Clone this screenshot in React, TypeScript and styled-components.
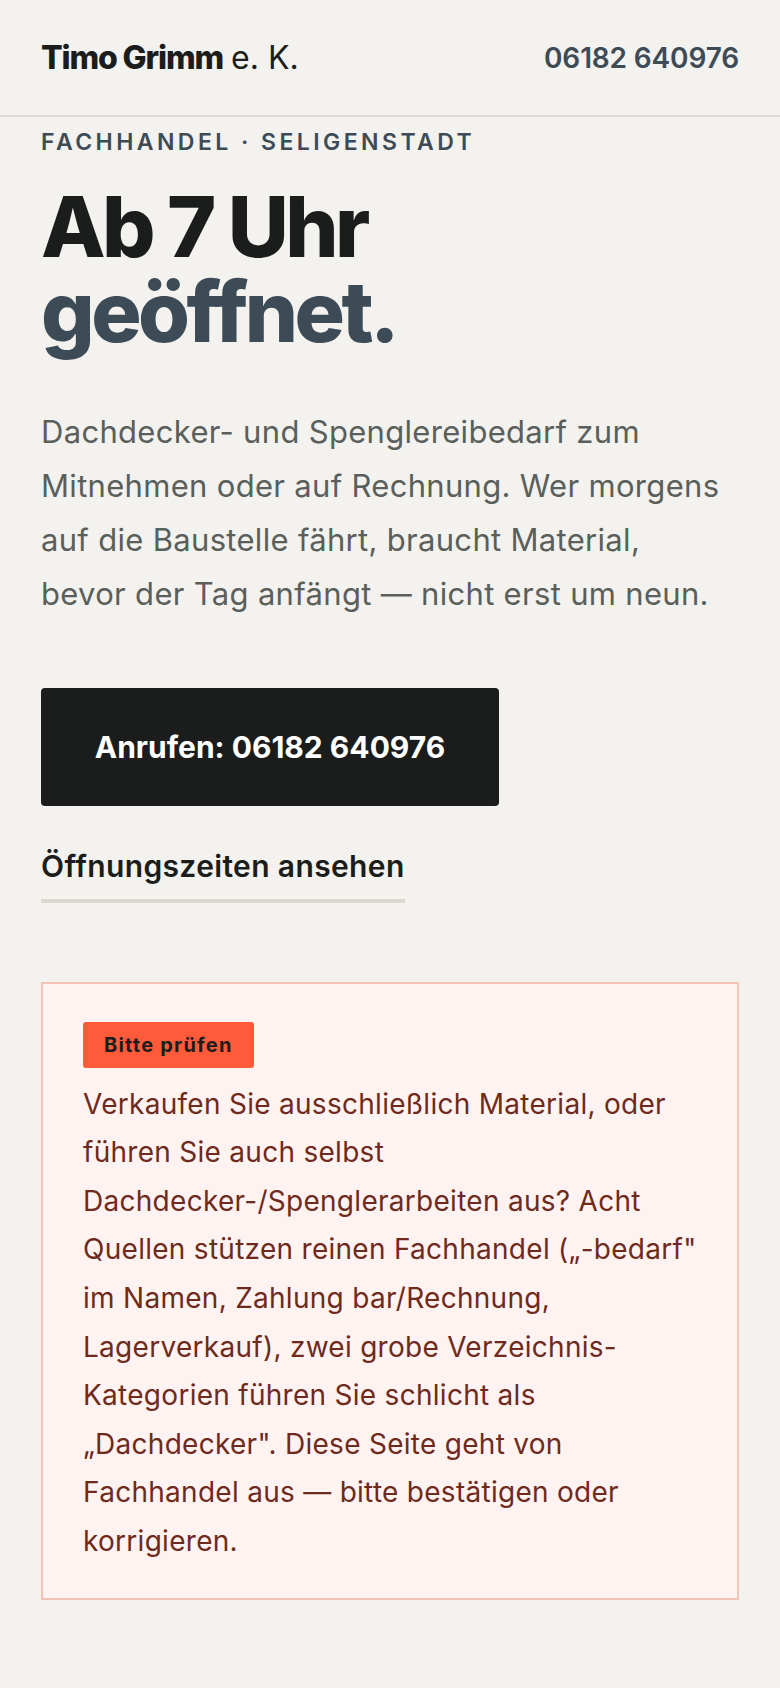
import React, { ReactElement } from 'react';
import styled, { createGlobalStyle } from 'styled-components';

const GlobalStyle = createGlobalStyle`
  html, body {
    margin: 0;
    padding: 0;
    background: #f3f2ee;
  }
  body {
    font-family: Inter, 'Noto Sans', sans-serif;
    color: #1b1d1c;
  }
  * {
    box-sizing: border-box;
  }
`;

const Header = styled.header`
  display: flex;
  align-items: center;
  justify-content: space-between;
  height: 117px;
  padding: 0 41px 0 41px;
  border-bottom: 2px solid #e0dbd2;
`;

const Logo = styled.div`
  font-size: 32px;
  font-weight: 800;
  letter-spacing: -0.035em;
  color: #1b1d1c;
`;

const LogoSuffix = styled.span`
  font-weight: 400;
  letter-spacing: 0;
  margin-left: 8px;
`;

const HeaderPhone = styled.a`
  font-size: 28px;
  font-weight: 600;
  color: #3d4b57;
  text-decoration: none;
  letter-spacing: -0.005em;
`;

const Hero = styled.section`
  display: flex;
  flex-direction: column;
  align-items: flex-start;
  padding: 10px 41px 0;
`;

const Eyebrow = styled.div`
  font-size: 23px;
  font-weight: 600;
  line-height: 30px;
  letter-spacing: 0.15em;
  text-transform: uppercase;
  color: #3d4b57;
`;

const Headline = styled.h1`
  margin: 28px 0 0;
  font-size: 84px;
  font-weight: 800;
  line-height: 1.01;
  letter-spacing: -0.042em;
  color: #1b1d1c;
`;

const Accent = styled.span`
  display: block;
  color: #3d4b57;
`;

const Lead = styled.p`
  max-width: 685px;
  margin: 50px 0 0;
  font-size: 31px;
  line-height: 54px;
  letter-spacing: 0.01em;
  color: #5a5f5c;
`;

const CallButton = styled.a`
  display: inline-flex;
  align-items: center;
  justify-content: center;
  margin-top: 67px;
  height: 118px;
  width: 458px;
  border-radius: 4px;
  background: #1b1d1c;
  color: #ffffff;
  font-size: 30px;
  font-weight: 700;
  text-decoration: none;
`;

const HoursLink = styled.a`
  margin-top: 39px;
  padding-bottom: 12px;
  border-bottom: 4px solid #dcd8cf;
  font-size: 30px;
  font-weight: 600;
  line-height: 1.4;
  letter-spacing: 0.012em;
  color: #1b1d1c;
  text-decoration: none;
`;

const Notice = styled.aside`
  margin: 79px 41px 0;
  padding: 38px 40px 32px;
  border: 2px solid #f2c4b8;
  background: #fff3f1;
`;

const Badge = styled.span`
  display: inline-block;
  padding: 0 21px;
  height: 46px;
  line-height: 46px;
  border-radius: 3px;
  background: #ff5a3a;
  color: #1b1d1c;
  font-size: 20px;
  font-weight: 700;
  letter-spacing: 0.06em;
`;

const NoticeText = styled.p`
  margin: 12px 0 0;
  font-size: 28px;
  line-height: 48.6px;
  letter-spacing: 0.01em;
  color: #6e2a1c;
`;

const App = (): ReactElement => {
  return (
    <>
      <GlobalStyle />
      <Header>
        <Logo>
          Timo Grimm<LogoSuffix>e. K.</LogoSuffix>
        </Logo>
        <HeaderPhone href='tel:06182640976'>06182 640976</HeaderPhone>
      </Header>
      <Hero>
        <Eyebrow>Fachhandel · Seligenstadt</Eyebrow>
        <Headline>
          Ab 7 Uhr
          <Accent>geöffnet.</Accent>
        </Headline>
        <Lead>
          Dachdecker- und Spenglereibedarf zum Mitnehmen oder auf Rechnung. Wer morgens auf die Baustelle fährt, braucht Material, bevor der Tag anfängt — nicht erst um neun.
        </Lead>
        <CallButton href='tel:06182640976'>Anrufen: 06182 640976</CallButton>
        <HoursLink href='#zeiten'>Öffnungszeiten ansehen</HoursLink>
      </Hero>
      <Notice>
        <Badge>Bitte prüfen</Badge>
        <NoticeText>
          Verkaufen Sie ausschließlich Material, oder führen Sie auch selbst Dachdecker-/Spenglerarbeiten aus? Acht Quellen stützen reinen Fachhandel („-bedarf" im Namen, Zahlung bar/Rechnung, Lagerverkauf), zwei grobe Verzeichnis-Kategorien führen Sie schlicht als „Dachdecker". Diese Seite geht von Fachhandel aus — bitte bestätigen oder korrigieren.
        </NoticeText>
      </Notice>
    </>
  );
};

export default App;
